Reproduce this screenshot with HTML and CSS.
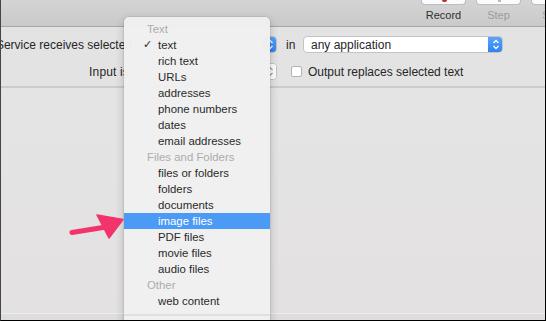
FILE: index.html
```html
<!DOCTYPE html>
<html>
<head>
<meta charset="utf-8">
<link rel="stylesheet" href="styles.css">
</head>
<body>
<div class="window">
  <div class="toolbar">
    <div class="tool">
      <div class="tbtn"><span class="rec-dot"></span></div>
      <div class="tlabel">Record</div>
    </div>
    <div class="tool">
      <div class="tbtn"><span class="step-mark"></span></div>
      <div class="tlabel dim">Step</div>
    </div>
    <div class="tool">
      <div class="tbtn"></div>
      <div class="tlabel dim">Stop</div>
    </div>
  </div>

  <div class="params">
    <div class="row">
      <div class="label">Service receives selected</div>
      <div class="popup narrow">
        <span class="ptext"></span>
        <span class="stepper blue">
          <svg width="8" height="11" viewBox="0 0 8 11"><path d="M1.5 4 L4 1.5 L6.5 4 M1.5 7 L4 9.5 L6.5 7" fill="none" stroke="#fff" stroke-width="1.3"/></svg>
        </span>
      </div>
      <div class="in">in</div>
      <div class="popup wide">
        <span class="ptext">any application</span>
        <span class="stepper blue">
          <svg width="8" height="11" viewBox="0 0 8 11"><path d="M1.5 4 L4 1.5 L6.5 4 M1.5 7 L4 9.5 L6.5 7" fill="none" stroke="#fff" stroke-width="1.3"/></svg>
        </span>
      </div>
    </div>
    <div class="row">
      <div class="label l2">Input is</div>
      <div class="popup narrow plain">
        <span class="ptext"></span>
        <span class="stepper gray">
          <svg width="8" height="11" viewBox="0 0 8 11"><path d="M1.5 4 L4 1.5 L6.5 4 M1.5 7 L4 9.5 L6.5 7" fill="none" stroke="#9a9a9a" stroke-width="1.2"/></svg>
        </span>
      </div>
      <div class="check"></div>
      <div class="clabel">Output replaces selected text</div>
    </div>
  </div>

  <div class="content"></div>
  <div class="footer"></div>

  <div class="menu">
    <div class="mhead">Text</div>
    <div class="mitem"><span class="mark">✓</span>text</div>
    <div class="mitem"><span class="mark"></span>rich text</div>
    <div class="mitem"><span class="mark"></span>URLs</div>
    <div class="mitem"><span class="mark"></span>addresses</div>
    <div class="mitem"><span class="mark"></span>phone numbers</div>
    <div class="mitem"><span class="mark"></span>dates</div>
    <div class="mitem"><span class="mark"></span>email addresses</div>
    <div class="mhead">Files and Folders</div>
    <div class="mitem"><span class="mark"></span>files or folders</div>
    <div class="mitem"><span class="mark"></span>folders</div>
    <div class="mitem"><span class="mark"></span>documents</div>
    <div class="mitem sel"><span class="mark"></span>image files</div>
    <div class="mitem"><span class="mark"></span>PDF files</div>
    <div class="mitem"><span class="mark"></span>movie files</div>
    <div class="mitem"><span class="mark"></span>audio files</div>
    <div class="mhead">Other</div>
    <div class="mitem"><span class="mark"></span>web content</div>
    <div class="msep"></div>
    <div class="mspace"></div>
  </div>

  <svg class="arrow" width="70" height="45" viewBox="0 0 70 45">
    <path d="M11 27.5 L42 22.5" stroke="#f2336c" stroke-width="5" stroke-linecap="round"/>
    <path d="M36 10 L62 14.5 L48 33 Z" fill="#f2336c" stroke="#f2336c" stroke-width="1.5" stroke-linejoin="round"/>
  </svg>
</div>
</body>
</html>
```

FILE: styles.css
```css
html, body {
  margin: 0;
  padding: 0;
  background: #e4e2e2;
}

.window {
  position: relative;
  width: 546px;
  height: 321px;
  box-sizing: border-box;
  border-left: 1px solid #454545;
  border-right: 1px solid #000;
  border-bottom: 1px solid #000;
  overflow: hidden;
  display: flex;
  flex-direction: column;
  font-family: "Liberation Sans", Arial, sans-serif;
  color: #262626;
}

.toolbar {
  height: 26px;
  flex: none;
  background: linear-gradient(#d5d4d5, #cbcacb);
  border-bottom: 1px solid #a8a7a8;
  display: flex;
  gap: 10px;
  padding-left: 420px;
}

.tool {
  width: 45px;
  flex: none;
  display: flex;
  flex-direction: column;
  align-items: center;
}

.tbtn {
  position: relative;
  width: 45px;
  height: 5px;
  box-sizing: border-box;
  background: #fbfbfb;
  border: 1px solid #bdbdbd;
  border-top: none;
  border-radius: 0 0 4px 4px;
}

.rec-dot {
  position: absolute;
  left: 20px;
  top: 0;
  width: 5px;
  height: 2px;
  background: #c9262a;
  border-radius: 0 0 2px 2px;
}

.step-mark {
  position: absolute;
  left: 21px;
  top: 0;
  width: 3px;
  height: 2px;
  background: #bbbbbb;
}

.tlabel {
  margin-top: 4px;
  font-size: 11px;
  line-height: 13px;
  color: #2e2e2e;
  white-space: nowrap;
}

.tlabel.dim {
  color: #9c9c9c;
}

.params {
  flex: none;
  height: 61px;
  box-sizing: border-box;
  background: #e3e3e3;
  border-bottom: 2px solid #cbcbcb;
  padding-top: 9px;
  display: flex;
  flex-direction: column;
  gap: 10px;
}

.row {
  display: flex;
  align-items: center;
  height: 17px;
  font-size: 12px;
}

.label {
  width: 131px;
  flex: none;
  display: flex;
  justify-content: flex-end;
  white-space: nowrap;
  margin-right: 9px;
}

.label.l2 {
  width: 128px;
  margin-right: 12px;
  letter-spacing: 0.15px;
}

.popup {
  height: 17px;
  box-sizing: border-box;
  background: #fff;
  border: 1px solid #c4c4c4;
  border-radius: 4px;
  display: flex;
  align-items: center;
  justify-content: space-between;
  overflow: hidden;
  flex: none;
}

.popup.narrow {
  width: 136px;
}

.popup.wide {
  width: 200px;
}

.ptext {
  padding-left: 7px;
  white-space: nowrap;
}

.stepper {
  width: 15px;
  height: 17px;
  margin-right: -1px;
  display: flex;
  align-items: center;
  justify-content: center;
  flex: none;
}

.stepper.blue {
  background: linear-gradient(#5aa7fb, #2f7ff2);
  border-radius: 0 4px 4px 0;
}

.stepper.gray {
  background: #fff;
}

.in {
  margin: 0 9px 0 9px;
  width: 8px;
}

.check {
  width: 11px;
  height: 11px;
  box-sizing: border-box;
  background: #fff;
  border: 1px solid #b3b3b3;
  border-radius: 2px;
  margin-left: 14px;
  flex: none;
}

.clabel {
  margin-left: 6px;
  white-space: nowrap;
}

.content {
  flex: 1;
  background: linear-gradient(#e5e4e4, #e3e1e1);
}

.footer {
  flex: none;
  height: 6px;
  background: #dedddd;
  border-top: 1px solid #eeeeee;
}

.menu {
  position: absolute;
  left: 123px;
  top: 17px;
  width: 146px;
  padding-top: 4px;
  background: rgba(240, 240, 240, 0.98);
  border-radius: 5px;
  box-shadow: 0 3px 10px rgba(0, 0, 0, 0.22), 0 0 0 0.5px rgba(0, 0, 0, 0.12);
  font-size: 11.4px;
  color: #2a2a2a;
}

.mhead {
  height: 16px;
  line-height: 16px;
  padding-left: 23px;
  color: #acacac;
  white-space: nowrap;
}

.mitem {
  height: 16px;
  line-height: 16px;
  padding-left: 19px;
  display: flex;
  white-space: nowrap;
}

.mark {
  width: 15px;
  flex: none;
  font-family: "DejaVu Sans", sans-serif;
  font-size: 11px;
  font-weight: bold;
}

.mitem.sel {
  background: #4b9af6;
  color: #fff;
}

.msep {
  height: 2px;
  background: #e0e0e0;
  margin: 5px 0 4px;
}

.mspace {
  height: 16px;
}

.arrow {
  position: absolute;
  left: 60px;
  top: 205px;
}
```
